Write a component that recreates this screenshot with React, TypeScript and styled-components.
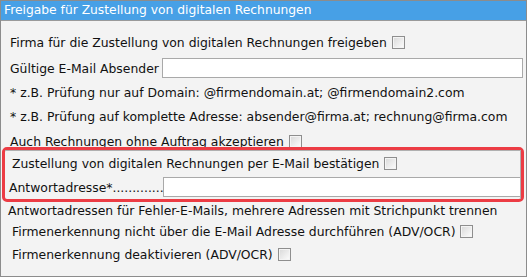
import React from "react"
import styled, { createGlobalStyle } from "styled-components"

const GlobalStyle = createGlobalStyle`
  html, body {
    margin: 0;
    padding: 0;
    background: #ffffff;
  }
  * {
    box-sizing: border-box;
  }
`

const Panel = styled.div`
  width: 527px;
  height: 277px;
  border: 1px solid #8c8c8c;
  background: #f3f3f3;
  font-family: "DejaVu Sans", Verdana, sans-serif;
  font-size: 12.4px;
  color: #111;
  overflow: hidden;
`

const Header = styled.div`
  height: 20px;
  background: #47a0e6;
  border-bottom: 1px solid #9a9a9a;
  color: #fff;
  padding-left: 3px;
  line-height: 19px;
  font-size: 12.3px;
  white-space: nowrap;
`

const Body = styled.div`
  display: flex;
  flex-direction: column;
  padding-top: 9px;
`

interface RowProps {
  $mt?: number
  $indent?: number
}

const Row = styled.div<RowProps>`
  display: flex;
  align-items: center;
  height: 24px;
  margin-top: ${(p) => p.$mt ?? 0}px;
  padding-left: ${(p) => p.$indent ?? 9}px;
  white-space: nowrap;
`

const Label = styled.span<{ $w: number }>`
  width: ${(p) => p.$w}px;
  flex: none;
  white-space: nowrap;
`

const TextInput = styled.div`
  width: 361px;
  height: 20px;
  flex: none;
  background: #fff;
  border: 1px solid #a9a9a9;
`

const Check = styled.span`
  display: inline-block;
  width: 13px;
  height: 13px;
  margin-left: 5px;
  border: 1px solid #8e8e8e;
  background: linear-gradient(135deg, #d8d8d8 0%, #f2f2f2 70%, #fdfdfd 100%);
  box-shadow: inset 0 0 0 1px #f4f4f4;
`

const Highlight = styled.div`
  margin: -6px 2px -4px 1px;
  border: 3px solid #ec3c44;
  border-radius: 5px;
  position: relative;
  z-index: 1;
`

const HighlightInner = styled.div`
  border-top: 1px solid #b0b0b0;
  border-right: 1px solid #b0b0b0;
  overflow: hidden;
`

export default function App() {
  return (
    <>
      <GlobalStyle />
      <Panel>
        <Header>Freigabe für Zustellung von digitalen Rechnungen</Header>
        <Body>
          <Row>
            Firma für die Zustellung von digitalen Rechnungen freigeben
            <Check />
          </Row>
          <Row $mt={2}>
            <Label $w={152}>Gültige E-Mail Absender</Label>
            <TextInput />
          </Row>
          <Row>* z.B. Prüfung nur auf Domain: @firmendomain.at; @firmendomain2.com</Row>
          <Row>* z.B. Prüfung auf komplette Adresse: absender@firma.at; rechnung@firma.com</Row>
          <Row $mt={1}>
            Auch Rechnungen ohne Auftrag akzeptieren
            <Check />
          </Row>
          <Highlight>
            <HighlightInner>
              <Row $indent={7}>
                Zustellung von digitalen Rechnungen per E-Mail bestätigen
                <Check />
              </Row>
              <Row $indent={4}>
                <Label $w={154}>Antwortadresse*.............</Label>
                <TextInput />
              </Row>
            </HighlightInner>
          </Highlight>
          <Row $indent={7}>
            Antwortadressen für Fehler-E-Mails, mehrere Adressen mit Strichpunkt trennen
          </Row>
          <Row $mt={-3} $indent={11}>
            Firmenerkennung nicht über die E-Mail Adresse durchführen (ADV/OCR)
            <Check />
          </Row>
          <Row $mt={-1} $indent={11}>
            Firmenerkennung deaktivieren (ADV/OCR)
            <Check />
          </Row>
        </Body>
      </Panel>
    </>
  )
}
